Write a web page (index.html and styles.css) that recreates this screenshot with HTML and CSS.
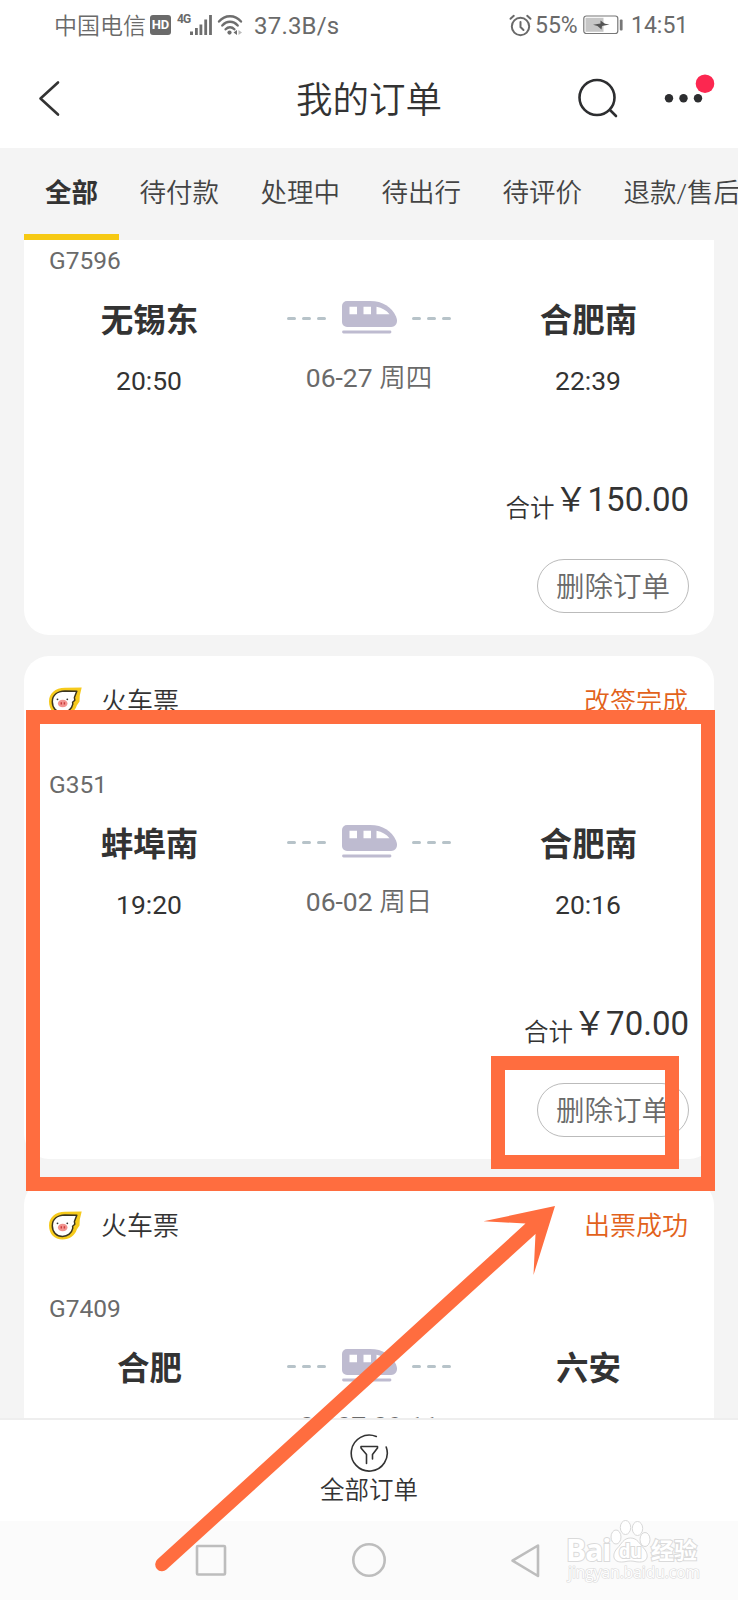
FILE: index.html
```
<!DOCTYPE html>
<html lang="zh-CN">
<head>
<meta charset="utf-8">
<title>我的订单</title>
<link rel="stylesheet" href="styles.css">
</head>
<body>
<svg width="0" height="0" class="defs" aria-hidden="true">
  <symbol id="train" viewBox="0 0 240 58">
    <g stroke="#b7c3c9" stroke-width="3" stroke-linecap="round">
      <path d="M39.5 20.400h6M54.500 20.400h6M69.500 20.400h6M164.500 20.400h6M179.500 20.400h6M194.500 20.400h6"/>
    </g>
    <path fill="#bebbd0" d="M98 3h23c13 0 21.500 6 26 15.500 2.800 6-.5 10.500-5 10.500H98a5 5 0 0 1-5-5V8a5 5 0 0 1 5-5z"/>
    <path fill="#fff" d="M100.500 8.800h7.500v7.500h-7.500zM114.500 8.800h7.500v7.500h-7.500zM127.500 8.800c5.500 1 10 3.600 13 7.500h-13z"/>
    <path stroke="#bebbd0" stroke-width="2.800" stroke-linecap="round" d="M94.500 34h46.500"/>
  </symbol>
  <symbol id="pig" viewBox="0 0 33 29">
    <path fill="#f6ca1c" d="M32.700 .6 16 .8C6 1 0 6.500 0 14.500 0 23 5.500 28.500 13.500 28.500c7 0 12.500-4 14.300-10l2.700-4 .3-6z"/>
    <path fill="#fff" stroke="#3b3520" stroke-width="1.500" stroke-linejoin="round" d="M27.800 4.300 16 4C8 4.300 3.300 8.500 3.300 14.800c0 6.200 4.200 10.700 10.200 10.700 5.200 0 9.300-3.400 10.300-8.300l-.2-2 2.200-2-.4-2.700z"/>
    <ellipse cx="13.700" cy="16.500" rx="4.800" ry="3.800" fill="#f29390"/>
    <path fill="#c93c3c" d="M11.600 15.300h1.400v2.200h-1.400zM14.700 15.300h1.400v2.200h-1.400z"/>
    <circle cx="8.500" cy="12.300" r=".9" fill="#333"/><circle cx="18.300" cy="12.300" r=".9" fill="#333"/>
  </symbol>
</svg>
<div class="screen">
  <div class="status">
    <span class="carrier">中国电信</span>
    <span class="hd">HD</span>
    <span class="net">4G</span>
    <svg class="signal" width="24" height="22" viewBox="0 0 24 22"><path fill="#6e6e6e" d="M1 17.500h3V21H1zM6 14h2.800v7H6zM10.500 10.500h2.800V21h-2.800zM15.300 5.500h2.800V21h-2.800zM20.100 1h2.800v20h-2.800z"/></svg>
    <svg class="wifi" width="26" height="22" viewBox="0 0 26 22"><g fill="none" stroke="#6e6e6e" stroke-width="2.400" stroke-linecap="round"><path d="M2 7.500C8 .4 18 .4 24 7.500M5.300 11.500c4.400-5 11-5 15.400 0M8.600 15.300c2.600-2.800 6.200-2.800 8.800 0"/></g><circle cx="12.500" cy="18.600" r="2.100" fill="#6e6e6e"/><path fill="#6e6e6e" d="M20 16v5l-3.500-2.500z"/><path fill="#bbb" d="M21.500 16v5l3.500-2.500z"/></svg>
    <span class="speed">37.3B/s</span>
    <svg class="alarm" width="23" height="23" viewBox="0 0 23 23"><g fill="none" stroke="#6a6a6a" stroke-width="2" stroke-linecap="round"><circle cx="11.500" cy="12.500" r="8.700"/><path d="M11.500 8v5l3 3M1.500 4.800l3.300-3M21.500 4.800l-3.300-3"/></g></svg>
    <span class="percent">55%</span>
    <svg class="battery" width="40" height="20" viewBox="0 0 40 20"><rect x=".8" y="1" width="34" height="17.500" rx="2.500" fill="#fff" stroke="#777" stroke-width="1.200"/><path fill="#c6c6c6" d="M2.500 2.800h18v14h-18z"/><path fill="#555" d="m10 9.800 7.500-1.200V5.600l4.500 3.200 4.500.8-7.500 1.500-.5 3.300-4-3.300z"/><rect x="36.800" y="4.500" width="2.800" height="11" rx="1" fill="#777"/></svg>
    <span class="clock">14:51</span>
  </div>
  <header class="header">
    <svg width="160" height="98" viewBox="0 0 160 98"><path d="M58 32.500 40.500 48.500 58 64.500" fill="none" stroke="#333" stroke-width="2.600" stroke-linecap="round" stroke-linejoin="round"/></svg>
    <h1 class="title">我的订单</h1>
    <svg width="160" height="98" viewBox="0 0 160 98"><g fill="none" stroke="#2d2e30" stroke-width="2.600" stroke-linecap="round"><circle cx="19" cy="47.500" r="17.500"/><path d="m32 60 6 6"/></g><g fill="#2d2e30"><circle cx="91" cy="48.300" r="4.200"/><circle cx="105.500" cy="48.300" r="4.200"/><circle cx="120" cy="48.300" r="4.200"/></g><circle cx="127" cy="33.700" r="9.300" fill="#fc2750"/></svg>
  </header>
  <nav class="tabs">
    <span class="tab active">全部</span><span class="tab">待付款</span><span class="tab">处理中</span><span class="tab">待出行</span><span class="tab">待评价</span><span class="tab">退款/售后</span>
  </nav>
  <main class="orders">
    <article class="card first">
      <div class="card-head"></div>
      <div class="number">G7596</div>
      <div class="route">
        <div class="stop"><b>无锡东</b><span>20:50</span></div>
        <div class="middle"><svg width="240" height="58"><use href="#train"/></svg><div class="date">06-27 <span class="day">周四</span></div></div>
        <div class="stop"><b>合肥南</b><span>22:39</span></div>
      </div>
      <div class="total"><span class="label">合计</span><span class="price">￥150.00</span></div>
      <div class="actions"><button class="delete">删除订单</button></div>
    </article>
    <article class="card">
      <div class="card-head"><svg width="33" height="29"><use href="#pig"/></svg><span class="kind">火车票</span><span class="state">改签完成</span></div>
      <div class="number">G351</div>
      <div class="route">
        <div class="stop"><b>蚌埠南</b><span>19:20</span></div>
        <div class="middle"><svg width="240" height="58"><use href="#train"/></svg><div class="date">06-02 <span class="day">周日</span></div></div>
        <div class="stop"><b>合肥南</b><span>20:16</span></div>
      </div>
      <div class="total"><span class="label">合计</span><span class="price">￥70.00</span></div>
      <div class="actions"><button class="delete">删除订单</button></div>
    </article>
    <article class="card">
      <div class="card-head"><svg width="33" height="29"><use href="#pig"/></svg><span class="kind">火车票</span><span class="state">出票成功</span></div>
      <div class="number">G7409</div>
      <div class="route">
        <div class="stop"><b>合肥</b></div>
        <div class="middle"><svg width="240" height="58"><use href="#train"/></svg><div class="date">06-07 09:11</div></div>
        <div class="stop"><b>六安</b></div>
      </div>
    </article>
  </main>
  <footer class="filter">
    <svg width="40" height="40" viewBox="0 0 40 40"><g fill="none" stroke="#333" stroke-width="1.600" stroke-linecap="round" stroke-linejoin="round"><path d="M27.300 3.500A18 18 0 1 0 37.200 14"/><path d="M17.500 30.500V21.500L12 15v-1.500h16.500V15l-5 6.500V26"/></g></svg>
    <span>全部订单</span>
  </footer>
  <div class="system">
    <svg width="738" height="79" viewBox="0 0 738 79"><g fill="none" stroke="#bdbdbd" stroke-width="2.600" stroke-linejoin="round"><rect x="197" y="25" width="28" height="28.500" rx="1"/><circle cx="369" cy="39" r="15.700"/><path d="M538 24.500v30.500L512.500 39.700z"/></g></svg>
  </div>
  <div class="watermark">
    <svg width="136" height="48" viewBox="0 0 136 48"><g fill="#fff" stroke="#d8d8d8" stroke-width="1"><ellipse cx="52" cy="17" rx="5" ry="7"/><ellipse cx="61.500" cy="7.500" rx="5.200" ry="7"/><ellipse cx="73.500" cy="8.500" rx="5.200" ry="7"/><ellipse cx="81" cy="19.500" rx="5" ry="7"/><path d="M66.500 18c7 0 9 6 13 10 5 5 6 14-4 14-4 0-5-1-9-1s-5 1-9 1c-10 0-9-9-4-14 4-4 6-10 13-10z"/></g></svg>
    <span class="wm bai">Bai</span><span class="wm du">du</span><span class="wm exp">经验</span><span class="wm url">jingyan.baidu.com</span>
  </div>
  <div class="mark order-mark"></div>
  <div class="mark button-mark"></div>
  <svg class="arrow" width="420" height="380" viewBox="0 0 420 380"><path fill="#ff6d3f" d="M405 6 333.500 21.300 375.500 23.500 7.500 359.300A6.800 6.800 0 0 0 16.500 369.500L385.500 34 383.500 75z"/></svg>
</div>
</body>
</html>
```
FILE: styles.css
```
* { box-sizing: border-box; }
body {
  margin: 0;
  background: #f4f4f4;
  color: #333;
  font-family: Roboto, "Noto Sans CJK SC", sans-serif;
  font-weight: 350;
}
.defs { position: absolute; }
.screen {
  position: relative;
  width: 738px;
  height: 1600px;
  overflow: hidden;
  display: flex;
  flex-direction: column;
}
.status {
  height: 50px;
  flex: none;
  display: flex;
  align-items: center;
  padding-left: 54px;
  background: #fff;
  color: #6a6a6a;
  white-space: nowrap;
}
.status span { flex: none; line-height: 30px; }
.status svg { flex: none; }
.status .carrier { width: 96px; font-size: 23px; padding-top: 3px; }
.status .hd {
  width: 21px;
  height: 20px;
  border-radius: 3px;
  background: #6a6a6a;
  color: #fff;
  font-size: 13px;
  font-weight: 700;
  line-height: 20px;
  text-align: center;
}
.status .net { margin-left: 6px; width: 13px; font-size: 12px; font-weight: 700; line-height: 12px; margin-bottom: 12px; letter-spacing: -1px; }
.signal { margin-left: -1px; }
.wifi { margin-left: 4px; }
.status .speed { margin-left: 11px; width: 92px; font-size: 24px; font-weight: 400; padding-top: 2px; letter-spacing: .2px; }
.alarm { margin-left: 163px; margin-right: 3px; }
.status .percent { width: 48px; font-size: 23px; font-weight: 400; padding-top: 2px; }
.status .clock { margin-left: 8px; font-size: 23px; font-weight: 400; padding-top: 2px; }
.header {
  height: 98px;
  flex: none;
  display: grid;
  grid-template-columns: 160px 1fr 160px;
  align-items: center;
  background: #fff;
}
.title { margin: 0; padding-top: 4px; font-size: 36.500px; font-weight: 350; text-align: center; line-height: 94px; }
.tabs {
  height: 92px;
  flex: none;
  display: flex;
  padding-left: 24px;
  background: #f4f4f4;
  white-space: nowrap;
  overflow: hidden;
}
.tab { flex: none; margin-right: 41.500px; font-size: 26.500px; line-height: 90px; color: #444; }
.tab.active { width: 95px; height: 92px; margin-right: 20.500px; text-align: center; font-weight: 700; color: #333; border-bottom: 6px solid #f6c913; }
.orders {
  height: 1178px;
  flex: none;
  overflow: hidden;
  padding: 0 24px;
}
.card {
  height: 503px;
  margin-bottom: 21px;
  padding: 0 25px;
  border-radius: 25px;
  background: #fff;
}
.card.first { margin-top: -108px; }
.card-head { height: 90px; display: flex; align-items: center; font-size: 26px; }
.kind, .state { line-height: 40px; padding-top: 2px; }
.kind { margin-left: 19px; }
.state { margin-left: auto; margin-right: 1px; color: #e2621b; }
.number { height: 76px; line-height: 78px; font-size: 24.500px; font-weight: 400; color: #6a6a6a; }
.route { height: 164px; display: grid; grid-template-columns: 200px 240px 198px; text-align: center; }
.stop b { display: block; padding-left: 1px; font-size: 32.500px; line-height: 46px; font-weight: 700; }
.stop span { display: block; margin-top: 15px; font-size: 26.500px; line-height: 44px; font-weight: 400; }
.middle svg { display: block; }
.date { font-size: 26.500px; line-height: 44px; color: #6a6a6a; font-weight: 400; }
.day { font-weight: 350; }
.total { height: 97px; display: flex; justify-content: flex-end; }
.label { margin-top: 23px; font-size: 24.500px; line-height: 48px; }
.price { margin-top: 14px; font-size: 33px; line-height: 48px; font-weight: 400; }
.actions { display: flex; justify-content: flex-end; }
.delete {
  width: 152px;
  height: 54px;
  padding: 3px 0 0;
  border: 1px solid #bbb;
  border-radius: 27px;
  background: #fff;
  color: #6a6a6a;
  font: inherit;
  font-size: 28.500px;
  line-height: 49px;
}
.filter {
  height: 103px;
  flex: none;
  display: flex;
  flex-direction: column;
  align-items: center;
  border-top: 2px solid #eee;
  padding-top: 13px;
  background: #fff;
  font-size: 24.500px;
  line-height: 36px;
}
.system { height: 79px; flex: none; background: #fbfbfb; }
.watermark { position: absolute; left: 564px; top: 1520px; width: 140px; height: 70px; }
.wm { position: absolute; color: #fff; -webkit-text-stroke: 2px #dadada; paint-order: stroke fill; font-weight: 700; line-height: 1; white-space: nowrap; }
.bai { left: 2px; top: 15px; font-size: 30px; font-family: "Open Sans", sans-serif; letter-spacing: -1px; }
.du { left: 55px; top: 21px; font-size: 20px; }
.exp { left: 87px; top: 20px; font-size: 23px; }
.url { left: 4px; top: 45px; font-size: 15.500px; font-family: "Open Sans", sans-serif; font-weight: 400; -webkit-text-stroke-width: 1.200px; }
.mark { position: absolute; border: 14px solid #ff6d3f; }
.order-mark { left: 26px; top: 710px; width: 689px; height: 481px; }
.button-mark { left: 491px; top: 1056px; width: 188px; height: 113px; }
.arrow { position: absolute; left: 150px; top: 1200px; }
```
